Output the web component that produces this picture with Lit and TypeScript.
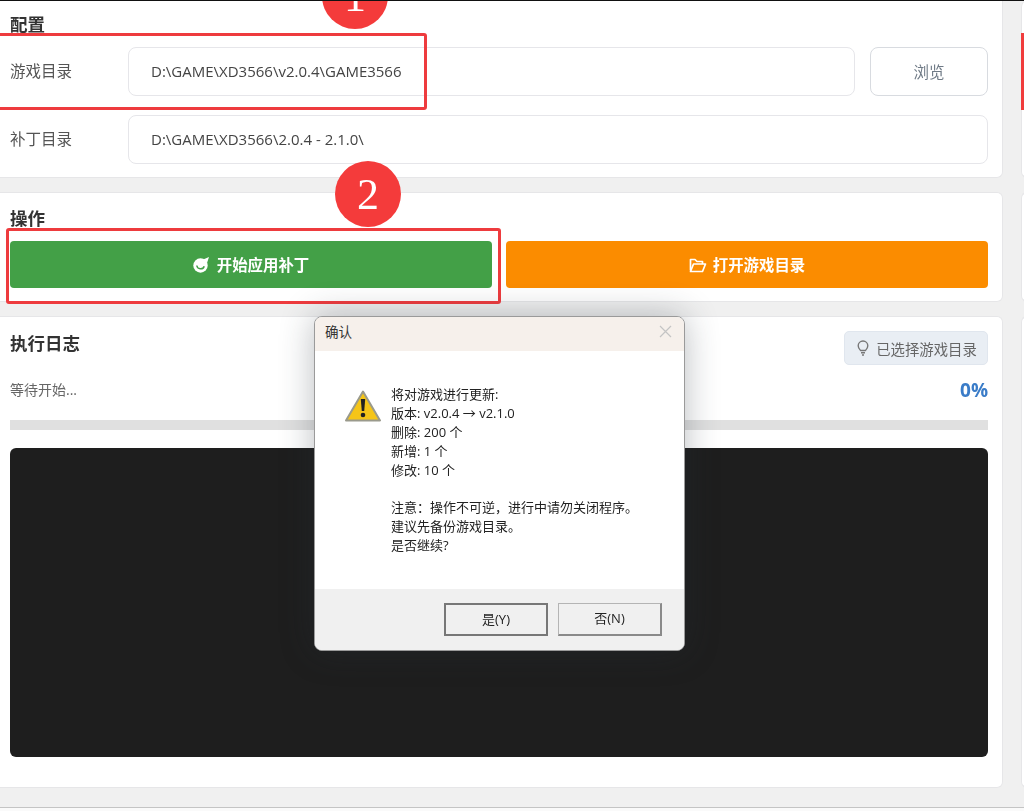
import { LitElement, html, css } from "lit";
import { customElement } from "lit/decorators.js";

@customElement("app-root")
export class AppRoot extends LitElement {
  static styles = css`
    :host { display: block; width: 1024px; height: 811px; overflow: hidden; position: relative; background: #f0f0f0; font-family: "Open Sans", "Noto Sans CJK SC", sans-serif; color: #333; }
    .page { height: 811px; box-sizing: border-box; border-top: 1px solid #111; filter: blur(0.5px); position: relative; overflow: hidden; }
    .grid { display: grid; grid-template-columns: 1003px 20px; column-gap: 18px; grid-template-rows: 177px 110px 472px; row-gap: 14px; }
    .card { background: #fff; border: 1px solid #e6e6e8; border-left: none; border-radius: 0 6px 6px 0; box-sizing: border-box; padding: 0 14px 0 10px; display: flex; flex-direction: column; min-width: 0; }
    .card.first { border-top: none; border-top-right-radius: 0; }
    .side { padding: 0; border-right: none; border-left: 1px solid #e6e6e8; border-radius: 6px 0 0 6px; }
    .side.first { border-top: none; }
    .strip { width: 3px; height: 77px; margin-top: 32px; background: #f03c3c; margin-left: -1px; }
    h2 { margin: 0; font-size: 17.5px; font-weight: 700; line-height: 20px; color: #333; }
    .first h2 { margin-top: 13px; }
    .row { display: flex; align-items: stretch; height: 49px; }
    .row.a { margin-top: 13px; }
    .row.b { margin-top: 19px; }
    .label { width: 118px; font-size: 15.5px; color: #555; display: flex; align-items: center; padding-bottom: 2px; box-sizing: border-box; }
    .input { flex: 1; border: 1.5px solid #e6e6ea; border-radius: 8px; padding: 0 0 1px 22px; display: flex; align-items: center; font-size: 15px; color: #444; box-sizing: border-box; }
    .browse { width: 118px; margin-left: 15px; border: 1.5px solid #d8dbe0; border-radius: 8px; display: flex; align-items: center; justify-content: center; font-size: 15.5px; color: #6f7a86; box-sizing: border-box; }
    .ops h2 { margin-top: 15px; }
    .btns { display: flex; gap: 14px; margin-top: 13px; }
    .btn { flex: 1; height: 47px; border-radius: 4px; color: #fff; font-size: 15.4px; font-weight: 700; display: flex; align-items: center; justify-content: center; gap: 6px; }
    .green { background: #43a047; }
    .orange { background: #fb8c00; }
    .log-head { display: flex; justify-content: space-between; align-items: center; margin-top: 14px; height: 34px; }
    .log-head h2 { margin-top: -10px; }
    .chip { width: 144px; height: 34px; box-sizing: border-box; background: #e9eef4; border: 1px solid #e0e6ee; border-radius: 5px; display: flex; align-items: center; justify-content: center; gap: 7px; font-size: 14.4px; color: #666; padding-left: 2px; }
    .status { display: flex; justify-content: space-between; align-items: center; margin-top: 10px; height: 30px; font-size: 14px; color: #666; }
    .status .wait { margin-top: -3px; }
    .pct { font-size: 19px; font-weight: 700; color: #3a7cc8; }
    .bar { height: 10px; margin-top: 15px; background: #e0e0e0; }
    .console { height: 309px; margin-top: 18px; background: #1e1e1e; border-radius: 6px; }
    .foot { position: absolute; left: 0; right: 0; top: 806px; height: 4px; background: #fafafa; border-top: 1px solid #c4c4c4; }
    .mark { position: absolute; border: 3.5px solid #ee3b3e; border-radius: 3px; box-sizing: border-box; }
    .m1 { left: -4px; top: 32px; width: 431px; height: 77px; }
    .m2 { left: 6px; top: 227px; width: 495px; height: 76px; }
    .dot { position: absolute; width: 66px; height: 66px; border-radius: 50%; background: #f43b3b; color: #fff; font-family: "Liberation Serif", serif; font-size: 44px; display: flex; align-items: center; justify-content: center; }
    .d1 { left: 322px; top: -38px; }
    .d2 { left: 335px; top: 160px; }
    .dialog { position: absolute; left: 314px; top: 315px; width: 371px; height: 335px; box-sizing: border-box; background: #fff; border: 1px solid #9a9a9a; border-radius: 8px; box-shadow: 0 0 34px rgba(40, 50, 60, 0.32); display: flex; flex-direction: column; overflow: hidden; }
    .dlg-title { height: 34px; flex: none; background: #f6f0eb; display: flex; align-items: center; justify-content: space-between; padding: 0 12px 6px 10px; box-sizing: border-box; font-size: 13.5px; color: #333; }
    .dlg-body { flex: 1; display: flex; padding: 39px 0 0 30px; gap: 10px; }
    .text { font-size: 13px; line-height: 18.9px; color: #222; white-space: pre; margin-top: -5px; }
    .dlg-foot { height: 61px; flex: none; background: #f0f0f0; display: flex; justify-content: flex-end; gap: 10px; padding: 14px 22px 0 0; box-sizing: border-box; }
    .wbtn { width: 104px; height: 33px; box-sizing: border-box; background: #f0f0f0; border: 1px solid #b4b4b4; border-right: 2px solid #8a8a8a; border-bottom: 2px solid #8a8a8a; display: flex; align-items: center; justify-content: center; font-size: 13px; color: #222; padding-bottom: 3px; }
    .wbtn.def { border: 2px solid #777; }
    svg { display: block; flex: none; }
  `;

  render() {
    return html`
      <div class="page">
        <div class="grid">
          <section class="card first">
            <h2>配置</h2>
            <div class="row a"><div class="label">游戏目录</div><div class="input">D:\\GAME\\XD3566\\v2.0.4\\GAME3566</div><div class="browse">浏览</div></div>
            <div class="row b"><div class="label">补丁目录</div><div class="input">D:\\GAME\\XD3566\\2.0.4 - 2.1.0\\</div></div>
          </section>
          <aside class="card side first"><div class="strip"></div></aside>
          <section class="card ops">
            <h2>操作</h2>
            <div class="btns">
              <div class="btn green">
                <svg width="18" height="17" viewBox="0 0 18 17"><circle cx="7.5" cy="9.5" r="7.2" fill="#fff"/><path d="M3.8 9.5 A3.8 3.8 0 0 0 11.2 10.2" fill="none" stroke="#43a047" stroke-width="1.5"/><path d="M9 4 L16 1 L14 7 Z" fill="#fff"/></svg>
                开始应用补丁
              </div>
              <div class="btn orange">
                <svg width="18" height="16" viewBox="0 0 18 16" fill="none" stroke="#fff" stroke-width="1.7" stroke-linejoin="round"><path d="M1.5 13.5 V2.5 H6 L8 4.5 H13.5 V7"/><path d="M1.5 14.5 L4.5 7 H16.5 L13.5 14.5 Z"/></svg>
                打开游戏目录
              </div>
            </div>
          </section>
          <aside class="card side"></aside>
          <section class="card">
            <div class="log-head">
              <h2>执行日志</h2>
              <div class="chip">
                <svg width="12" height="16" viewBox="0 0 12 16" fill="none" stroke="#777" stroke-width="1.4"><path d="M3.6 10.5 C2.5 9.3 1.2 8.2 1.2 5.8 A4.8 4.8 0 0 1 10.8 5.8 C10.8 8.2 9.5 9.3 8.4 10.5 Z"/><path d="M4 12.8 H8 M5 15 H7"/></svg>
                已选择游戏目录
              </div>
            </div>
            <div class="status"><span class="wait">等待开始...</span><span class="pct">0%</span></div>
            <div class="bar"></div>
            <div class="console"></div>
          </section>
          <aside class="card side"></aside>
        </div>
        <div class="foot"></div>
        <div class="mark m1"></div>
        <div class="mark m2"></div>
        <div class="dot d1">1</div>
        <div class="dot d2">2</div>
        <div class="dialog">
          <div class="dlg-title">
            <span>确认</span>
            <svg width="13" height="13" viewBox="0 0 13 13" stroke="#c4c4c4" stroke-width="1.2"><path d="M1 1 L12 12 M12 1 L1 12"/></svg>
          </div>
          <div class="dlg-body">
            <svg width="36" height="32" viewBox="0 0 36 32">
              <path d="M18 1.5 L35 30.5 H1 Z" fill="#f5c518" stroke="#9a9a8c" stroke-width="2" stroke-linejoin="round"/>
              <path d="M15.8 9 H20.2 L19.2 21 H16.8 Z" fill="#222"/>
              <circle cx="18" cy="25" r="2.3" fill="#222"/>
            </svg>
            <div class="text">将对游戏进行更新:
版本: v2.0.4 → v2.1.0
删除: 200 个
新增: 1 个
修改: 10 个

注意：操作不可逆，进行中请勿关闭程序。
建议先备份游戏目录。
是否继续?</div>
          </div>
          <div class="dlg-foot">
            <div class="wbtn def">是(Y)</div>
            <div class="wbtn">否(N)</div>
          </div>
        </div>
      </div>
    `;
  }
}
